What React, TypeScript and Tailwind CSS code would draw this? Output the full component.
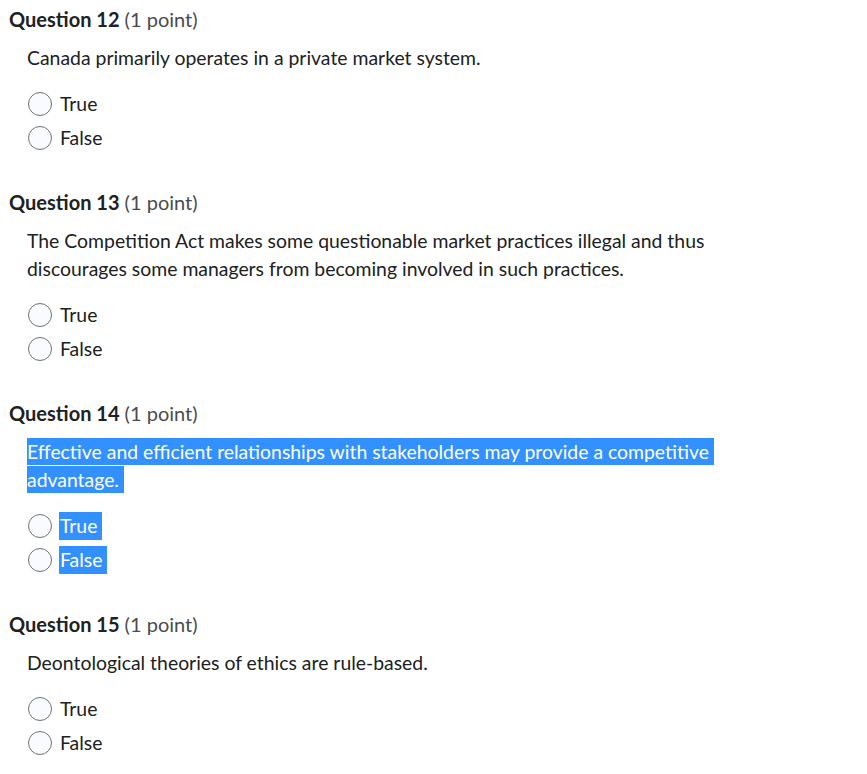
import React from "react";

type Q = { num: number; text: React.ReactNode; selected?: boolean };

function Radio({ label, selected }: { label: string; selected?: boolean }) {
  return (
    <div className="flex items-center h-[28px]">
      <span className="ml-[1px] w-[24px] h-[24px] rounded-full border border-[#6e7376] bg-[#f9fbff] shrink-0" />
      <span className="ml-[7px] h-[28px] leading-[28px] flex items-center">
        {selected ? (
          <span className="bg-[#3390ff] text-white pl-px pr-[5px] leading-[28px] h-[28px] inline-block">{label}</span>
        ) : (
          <span className="pl-px">{label}</span>
        )}
      </span>
    </div>
  );
}

function Question({ num, text, selected }: Q) {
  return (
    <div className="mb-[36px]">
      <h2 className="leading-[28px] text-[20px]">
        <span className="font-bold text-[#202122]">Question {num}</span>{" "}
        <span className="text-[#494c4e]">(1 point)</span>
      </h2>
      <div className="pl-[18px]">
        <p className="mt-[11px] w-[740px] leading-[28px] text-[#202122]">{text}</p>
        <div className="mt-[18px] flex flex-col gap-[6px]">
          <Radio label="True" selected={selected} />
          <Radio label="False" selected={selected} />
        </div>
      </div>
    </div>
  );
}

export default function App() {
  return (
    <div
      className="bg-white min-h-[774px] pl-[9px] pt-[5px] text-[19.4px] text-[#202122]"
      style={{ fontFamily: "Lato, 'Noto Sans', sans-serif" }}
    >
      <Question num={12} text="Canada primarily operates in a private market system." />
      <Question
        num={13}
        text="The Competition Act makes some questionable market practices illegal and thus discourages some managers from becoming involved in such practices."
      />
      <Question
        num={14}
        selected
        text={
          <span className="bg-[#3390ff] text-white py-[2px] pr-[5px] box-decoration-clone">
            Effective and efficient relationships with stakeholders may provide a competitive advantage.
          </span>
        }
      />
      <Question num={15} text="Deontological theories of ethics are rule-based." />
    </div>
  );
}
